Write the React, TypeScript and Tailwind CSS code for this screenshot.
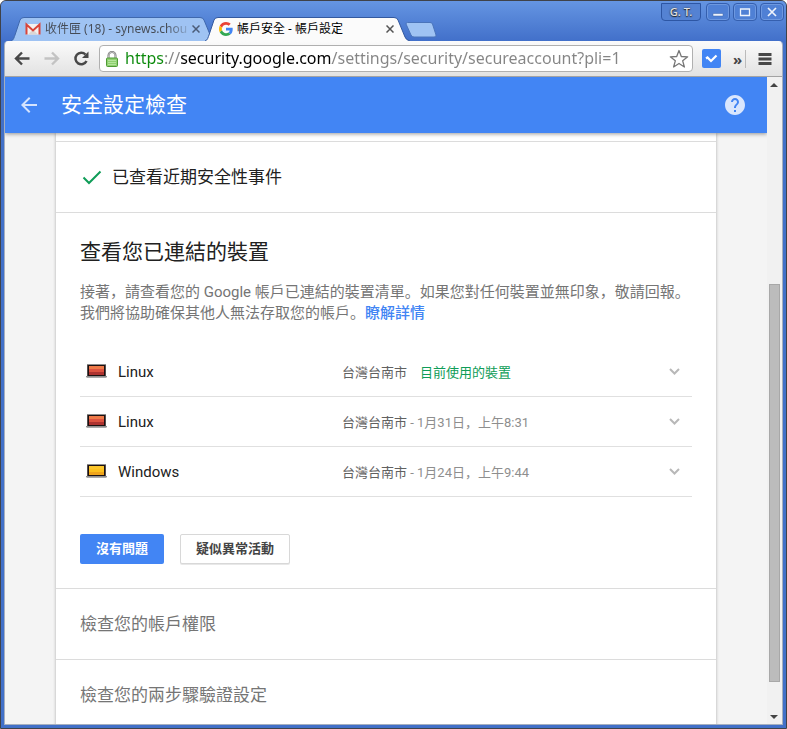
import { useState } from "react";
import { clsx } from "clsx";

interface Device {
  id: number;
  name: string;
  place: string;
  seen?: string;
  kind: "linux" | "windows";
}

const devices: Device[] = [
  { id: 1, name: "Linux", place: "台灣台南市", kind: "linux" },
  { id: 2, name: "Linux", place: "台灣台南市", seen: "1月31日，上午8:31", kind: "linux" },
  { id: 3, name: "Windows", place: "台灣台南市", seen: "1月24日，上午9:44", kind: "windows" },
];

function GmailIcon() {
  return (
    <svg className="h-4 w-4 shrink-0" viewBox="0 0 16 16" aria-hidden="true">
      <path d="M1 3h14v10.500H1z" fill="#f4f0ef" />
      <path d="M3 13.500 8 8.500l5 5z" fill="#dcd6d4" />
      <path d="M1.500 13.500V3.500L8 9.500l6.500-6v10" fill="none" stroke="#d9453a" strokeWidth="2" />
    </svg>
  );
}

function GoogleIcon() {
  return (
    <svg className="h-3.5 w-3.5 shrink-0" viewBox="0 0 48 48" aria-hidden="true">
      <path fill="#EA4335" d="M24 9.500c3.540 0 6.710 1.220 9.210 3.600l6.850-6.850C35.900 2.380 30.470 0 24 0 14.620 0 6.510 5.380 2.560 13.220l7.980 6.190C12.430 13.720 17.740 9.500 24 9.500z" />
      <path fill="#4285F4" d="M46.980 24.550c0-1.570-.15-3.090-.38-4.550H24v9.020h12.940c-.58 2.960-2.260 5.480-4.780 7.180l7.730 6c4.510-4.180 7.090-10.360 7.090-17.650z" />
      <path fill="#FBBC05" d="M10.530 28.590c-.48-1.450-.76-2.990-.76-4.590s.27-3.140.76-4.590l-7.980-6.190C.92 16.460 0 20.120 0 24c0 3.880.92 7.540 2.560 10.780l7.970-6.190z" />
      <path fill="#34A853" d="M24 48c6.480 0 11.930-2.130 15.890-5.810l-7.730-6c-2.150 1.450-4.920 2.300-8.160 2.300-6.260 0-11.570-4.220-13.470-9.910l-7.980 6.190C6.510 42.620 14.620 48 24 48z" />
    </svg>
  );
}

interface TabProps {
  title: string;
  icon: React.ReactNode;
  active?: boolean;
}

function BrowserTab({ title, icon, active }: TabProps) {
  return (
    <div className={clsx("relative h-6 w-52", active ? "z-10 -ml-[14px]" : "z-0")}>
      <svg className="absolute inset-0 h-full w-full" viewBox="0 0 208 24" preserveAspectRatio="none" aria-hidden="true">
        <path
          d="M0 24C3 23 3 20 4 18L9 3Q10 .5 13 .5H189Q192 .5 193 3L200 20Q201 23 205 24"
          fill={active ? "#fbfbfb" : "#9fc3f3"}
          stroke={active ? "#33599f" : "#3f68ad"}
        />
      </svg>
      <div className="relative flex h-full items-center pl-[14px] pr-[19px]">
        {icon}
        <button
          className={clsx(
            "ml-1 flex-1 whitespace-nowrap text-left text-xs",
            active ? "text-black" : "bg-linear-to-r from-[#454b55] from-85% to-[#454b55]/20 bg-clip-text text-transparent"
          )}
        >
          {title}
        </button>
        <button className="ml-1 h-2 w-2" aria-label="關閉分頁">
          <svg className="h-2 w-2" viewBox="0 0 8 8" stroke={active ? "#555" : "#4b5c78"} strokeWidth="1.500">
            <path d="M.5.5l7 7M7.500.5l-7 7" />
          </svg>
        </button>
      </div>
    </div>
  );
}

function WindowControls() {
  return (
    <div className="ml-auto mr-[2px] mt-[2px] flex gap-[3px] self-start">
      <button className="mr-[2px] h-[18px] w-10 rounded-b border border-[#2d56a4] bg-[#5482d3] text-[11px] leading-[16px] font-medium text-[#e4e4e4] [text-shadow:0_1px_1px_#222,0_0_2px_#333]">
        G. T.
      </button>
      <button className="flex h-[18px] w-6 items-center justify-center rounded-sm border border-[#355fae] bg-[#4f80d5] inset-ring inset-ring-[#6d98e0]" aria-label="最小化">
        <svg className="h-3 w-3" viewBox="0 0 12 12">
          <path d="M1 7.500h10v2.500H1z" fill="#eef3fc" stroke="#3c64ab" strokeWidth=".5" />
        </svg>
      </button>
      <button className="flex h-[18px] w-6 items-center justify-center rounded-sm border border-[#355fae] bg-[#4f80d5] inset-ring inset-ring-[#6d98e0]" aria-label="最大化">
        <svg className="h-3 w-3" viewBox="0 0 12 12">
          <path d="M1.500 3h9v6.500h-9z" fill="none" stroke="#eef3fc" strokeWidth="1.300" />
        </svg>
      </button>
      <button className="flex h-[18px] w-6 items-center justify-center rounded-sm border border-[#355fae] bg-[#4f80d5] inset-ring inset-ring-[#6d98e0]" aria-label="關閉">
        <svg className="h-3 w-3" viewBox="0 0 12 12">
          <path d="M2 2l8 8M10 2l-8 8" fill="none" stroke="#eef3fc" strokeWidth="1.700" />
        </svg>
      </button>
    </div>
  );
}

function Toolbar() {
  return (
    <div className="flex h-9 items-center border-b border-[#a3a3a3] bg-linear-to-b from-[#fbfbfb] to-[#e2e2e2] pl-[9px] pr-[10px]">
      <button className="h-4 w-4" aria-label="上一頁">
        <svg className="h-4 w-4" viewBox="0 0 16 16" fill="none" stroke="#484848" strokeWidth="2.400">
          <path d="M15.500 7.500H2.500M8 1.500l-6 6 6 6" />
        </svg>
      </button>
      <button className="ml-[14px] h-4 w-4" aria-label="下一頁">
        <svg className="h-4 w-4" viewBox="0 0 16 16" fill="none" stroke="#c3c3c3" strokeWidth="2.400">
          <path d="M.5 7.500h13M8 1.500l6 6-6 6" />
        </svg>
      </button>
      <button className="ml-[13px] h-4 w-4" aria-label="重新載入">
        <svg className="h-4 w-4" viewBox="0 0 16 16">
          <path d="M12.500 3.500A5.800 5.800 0 1 0 13.500 10" fill="none" stroke="#484848" strokeWidth="2.500" />
          <path d="M15.500.5v6.500H9z" fill="#484848" />
        </svg>
      </button>
      <div className="ml-[10px] flex h-[27px] flex-1 items-center rounded-sm border border-[#b0b0b0] bg-white pl-[6px] pr-[3px]">
        <svg className="h-4 w-3 shrink-0" viewBox="0 0 12 16" aria-hidden="true">
          <path d="M2.500 8V4.500a3.500 3.500 0 0 1 7 0V8" fill="none" stroke="#777" strokeWidth="2" />
          <path d="M2.500 8V4.500a3.500 3.500 0 0 1 7 0V8" fill="none" stroke="#ddd" strokeWidth=".7" />
          <rect x=".5" y="7" width="11" height="8.500" rx="1" fill="#8fd070" stroke="#4f9a35" />
          <path d="M2 9.500h8M2 11.500h8M2 13.500h8" stroke="#b4e49c" />
        </svg>
        <input
          className="ml-[7px] h-6 min-w-0 flex-1 bg-[linear-gradient(to_right,#0b8a0b_40px,#858585_40px_56px,#000_56px_207px,#858585_207px)] bg-clip-text pb-[2px] text-base text-transparent caret-black outline-none"
          aria-label="網址"
          spellCheck={false}
          defaultValue="https://security.google.com/settings/security/secureaccount?pli=1"
        />
        <button className="h-5 w-5" aria-label="加入書籤">
          <svg className="h-5 w-5" viewBox="0 0 20 20" fill="#fff" stroke="#777" strokeWidth="1.300" strokeLinejoin="round">
            <path d="M10 1.500l2.300 6 6.400.3-5 4 1.700 6.200-5.400-3.500L4.600 18l1.700-6.200-5-4 6.400-.3z" />
          </svg>
        </button>
      </div>
      <button className="ml-[9px] flex h-[19px] w-[19px] items-center justify-center rounded-xs bg-[#4285f4]" aria-label="擴充功能">
        <svg className="h-[13px] w-[13px]" viewBox="0 0 13 13" fill="none" stroke="#fff" strokeWidth="2.200">
          <path d="M1 6.500l1.500-1L6 9l5.500-5.500" />
        </svg>
      </button>
      <button className="ml-3 h-5 w-2 text-[15px] leading-[16px] font-bold text-[#444]" aria-label="更多擴充功能">
        »
      </button>
      <div className="ml-1 h-[18px] w-px bg-[#bbb]" />
      <button className="ml-3 h-[14px] w-[14px]" aria-label="選單">
        <svg className="h-[14px] w-[14px]" viewBox="0 0 14 14" fill="#484848">
          <path d="M.5 1h13v3H.5zM.5 5.500h13v3H.5zM.5 10h13v3H.5z" />
        </svg>
      </button>
    </div>
  );
}

function LaptopIcon({ kind }: { kind: Device["kind"] }) {
  const linux = kind === "linux";
  return (
    <svg className="h-[15px] w-[22px] shrink-0" viewBox="0 0 22 15" aria-hidden="true">
      <path d="M1 0h19v12H1z" fill="#8c8c8c" />
      <path d="M1.500 1h18v11h-18z" fill="#1d1111" />
      <path d="M3 2h15v3H3z" fill={linux ? "#ee7a48" : "#fcc62b"} />
      <path d="M3 5h15v3H3z" fill={linux ? "#dc5240" : "#fcc01e"} />
      <path d="M3 8h15v3H3z" fill={linux ? "#ad3330" : "#efa41b"} />
      <path d="M0 12h21v1l-1 .7H1L0 13z" fill="#8f8f8f" />
    </svg>
  );
}

function DeviceRow({ device }: { device: Device }) {
  const [open, setOpen] = useState(false);

  return (
    <li className="flex h-[50px] items-center border-b border-[#e0e0e0] pl-[6px] pr-3">
      <LaptopIcon kind={device.kind} />
      <span className="ml-[10px] w-56 pt-[2px] text-[15px] text-[#212121]">{device.name}</span>
      <span className="flex-1 pt-[2px] text-[13px] text-[#616161]">
        {device.place}
        {device.seen ? (
          <span className="text-[#8e8e8e]"> - {device.seen}</span>
        ) : (
          <span className="ml-[13px] text-[#0f9d58]">目前使用的裝置</span>
        )}
      </span>
      <button aria-label={`${device.name} 詳細資料`} aria-expanded={open} onClick={() => setOpen(!open)}>
        <svg className={clsx("h-[11px] w-[11px]", open && "rotate-180")} viewBox="0 0 11 11" fill="none" stroke="#b8b8b8" strokeWidth="2">
          <path d="M1 3l4.500 4.500L10 3" />
        </svg>
      </button>
    </li>
  );
}

function Scrollbar() {
  return (
    <div className="flex w-[15px] shrink-0 flex-col items-center bg-[#f1f1f1] pr-px">
      <svg className="h-[14px] w-2" viewBox="0 0 8 14" fill="#444" aria-hidden="true">
        <path d="M0 10l4-4 4 4z" />
      </svg>
      <div className="grow-[194]" />
      <div className="w-[11px] grow-[397] border border-[#a8a8a8] bg-[#bcbcbc]" />
      <div className="grow-[28]" />
      <svg className="h-[14px] w-2" viewBox="0 0 8 14" fill="#444" aria-hidden="true">
        <path d="M0 5l4 4 4-4z" />
      </svg>
    </div>
  );
}

function SecurityPage() {
  return (
    <div className="flex min-w-0 flex-1 flex-col overflow-hidden bg-[#f4f4f4] font-[Roboto,'Noto_Sans_CJK_SC',sans-serif]">
      <header className="z-10 flex h-14 shrink-0 items-center bg-[#4285f4] pl-3 pr-5 shadow-[0_1px_4px_rgba(0,0,0,0.4)]">
        <a href="#back" aria-label="返回">
          <svg className="h-6 w-6" viewBox="0 0 24 24" fill="#d5e3fd">
            <path d="M20 11H7.830l5.590-5.590L12 4l-8 8 8 8 1.410-1.410L7.830 13H20v-2z" />
          </svg>
        </a>
        <h1 className="ml-5 flex-1 pt-[2px] text-[21px] text-white">安全設定檢查</h1>
        <a href="#help" aria-label="說明">
          <svg className="h-6 w-6" viewBox="0 0 24 24" fill="#d9e6fd">
            <path d="M12 2C6.480 2 2 6.480 2 12s4.480 10 10 10 10-4.480 10-10S17.520 2 12 2zm1 17h-2v-2h2v2zm2.070-7.750l-.9.920C13.450 12.900 13 13.500 13 15h-2v-.5c0-1.100.45-2.100 1.170-2.830l1.240-1.260c.37-.36.590-.86.590-1.410 0-1.100-.9-2-2-2s-2 .9-2 2H8c0-2.210 1.790-4 4-4s4 1.790 4 4c0 .88-.36 1.680-.93 2.250z" />
          </svg>
        </a>
      </header>

      <main className="mx-auto w-full max-w-[660px] flex-1 bg-white pt-2 shadow-[0_0_3px_rgba(0,0,0,0.3)]">
        <div className="flex h-[72px] items-center border-y border-[#dcdcdc] pl-6">
          <svg className="h-6 w-6" viewBox="0 0 24 24" fill="none" stroke="#0f9d58" strokeWidth="2">
            <path d="M3.500 12.500l5.500 5.500L20.500 6.500" />
          </svg>
          <h2 className="ml-2 pt-[2px] text-[17px] text-[#212121]">已查看近期安全性事件</h2>
        </div>

        {/* Connected devices */}
        <section className="border-b border-[#dcdcdc] px-6 py-6">
          <h2 className="text-[21px] leading-[30px] text-[#212121]">查看您已連結的裝置</h2>
          <p className="mt-[15px] text-[15px] leading-[21px] text-[#757575]">
            接著，請查看您的 Google 帳戶已連結的裝置清單。如果您對任何裝置並無印象，敬請回報。
            <br />
            我們將協助確保其他人無法存取您的帳戶。
            <a href="#learn-more" className="font-medium text-[#4285f4]">
              瞭解詳情
            </a>
          </p>
          <ul className="mt-[23px]">
            {devices.map((device) => (
              <DeviceRow key={device.id} device={device} />
            ))}
          </ul>
          <div className="mt-[37px] flex gap-4 text-[13px] font-bold">
            <button className="h-[30px] rounded-xs bg-[#4285f4] px-4 text-white">沒有問題</button>
            <button className="h-[30px] rounded-xs border border-[#d8d8d8] bg-white px-[15px] text-[#444] shadow-[0_1px_0_#e8e8e8]">
              疑似異常活動
            </button>
          </div>
        </section>

        <h2 className="border-b border-[#dcdcdc] px-6 text-[17px] leading-[70px] text-[#757575]">檢查您的帳戶權限</h2>
        <h2 className="px-6 text-[17px] leading-[70px] text-[#757575]">檢查您的兩步驟驗證設定</h2>
      </main>
    </div>
  );
}

export default function App() {
  return (
    <div className="flex h-screen flex-col overflow-hidden rounded-t-md border border-[#3f4249] bg-[#4170c8] font-['Noto_Sans','Noto_Sans_CJK_TC',sans-serif]">
      <div className="flex h-10 shrink-0 items-end bg-linear-to-b from-[#6595e2] to-[#4270ca] pl-[10px]">
        <BrowserTab title="收件匣 (18) - synews.chou" icon={<GmailIcon />} />
        <BrowserTab title="帳戶安全 - 帳戶設定" icon={<GoogleIcon />} active />
        <button className="z-20 -ml-2 mb-[3px] h-4 w-8" aria-label="新分頁">
          <svg className="h-4 w-8" viewBox="0 0 32 16" fill="#9fc3f3" stroke="#4a74ba">
            <path d="M2.500.5H25q2 0 2.500 1.500L31 13q.5 2-2 2H9q-2 0-3-2L1 2Q.7.7 2.500.5z" />
          </svg>
        </button>
        <WindowControls />
      </div>
      <div className="mx-[3px] mb-[3px] flex min-h-0 flex-1 flex-col overflow-hidden rounded-t-sm border border-t-0 border-[#a5afbf]">
        <Toolbar />
        <div className="flex min-h-0 flex-1">
          <SecurityPage />
          <Scrollbar />
        </div>
      </div>
    </div>
  );
}
